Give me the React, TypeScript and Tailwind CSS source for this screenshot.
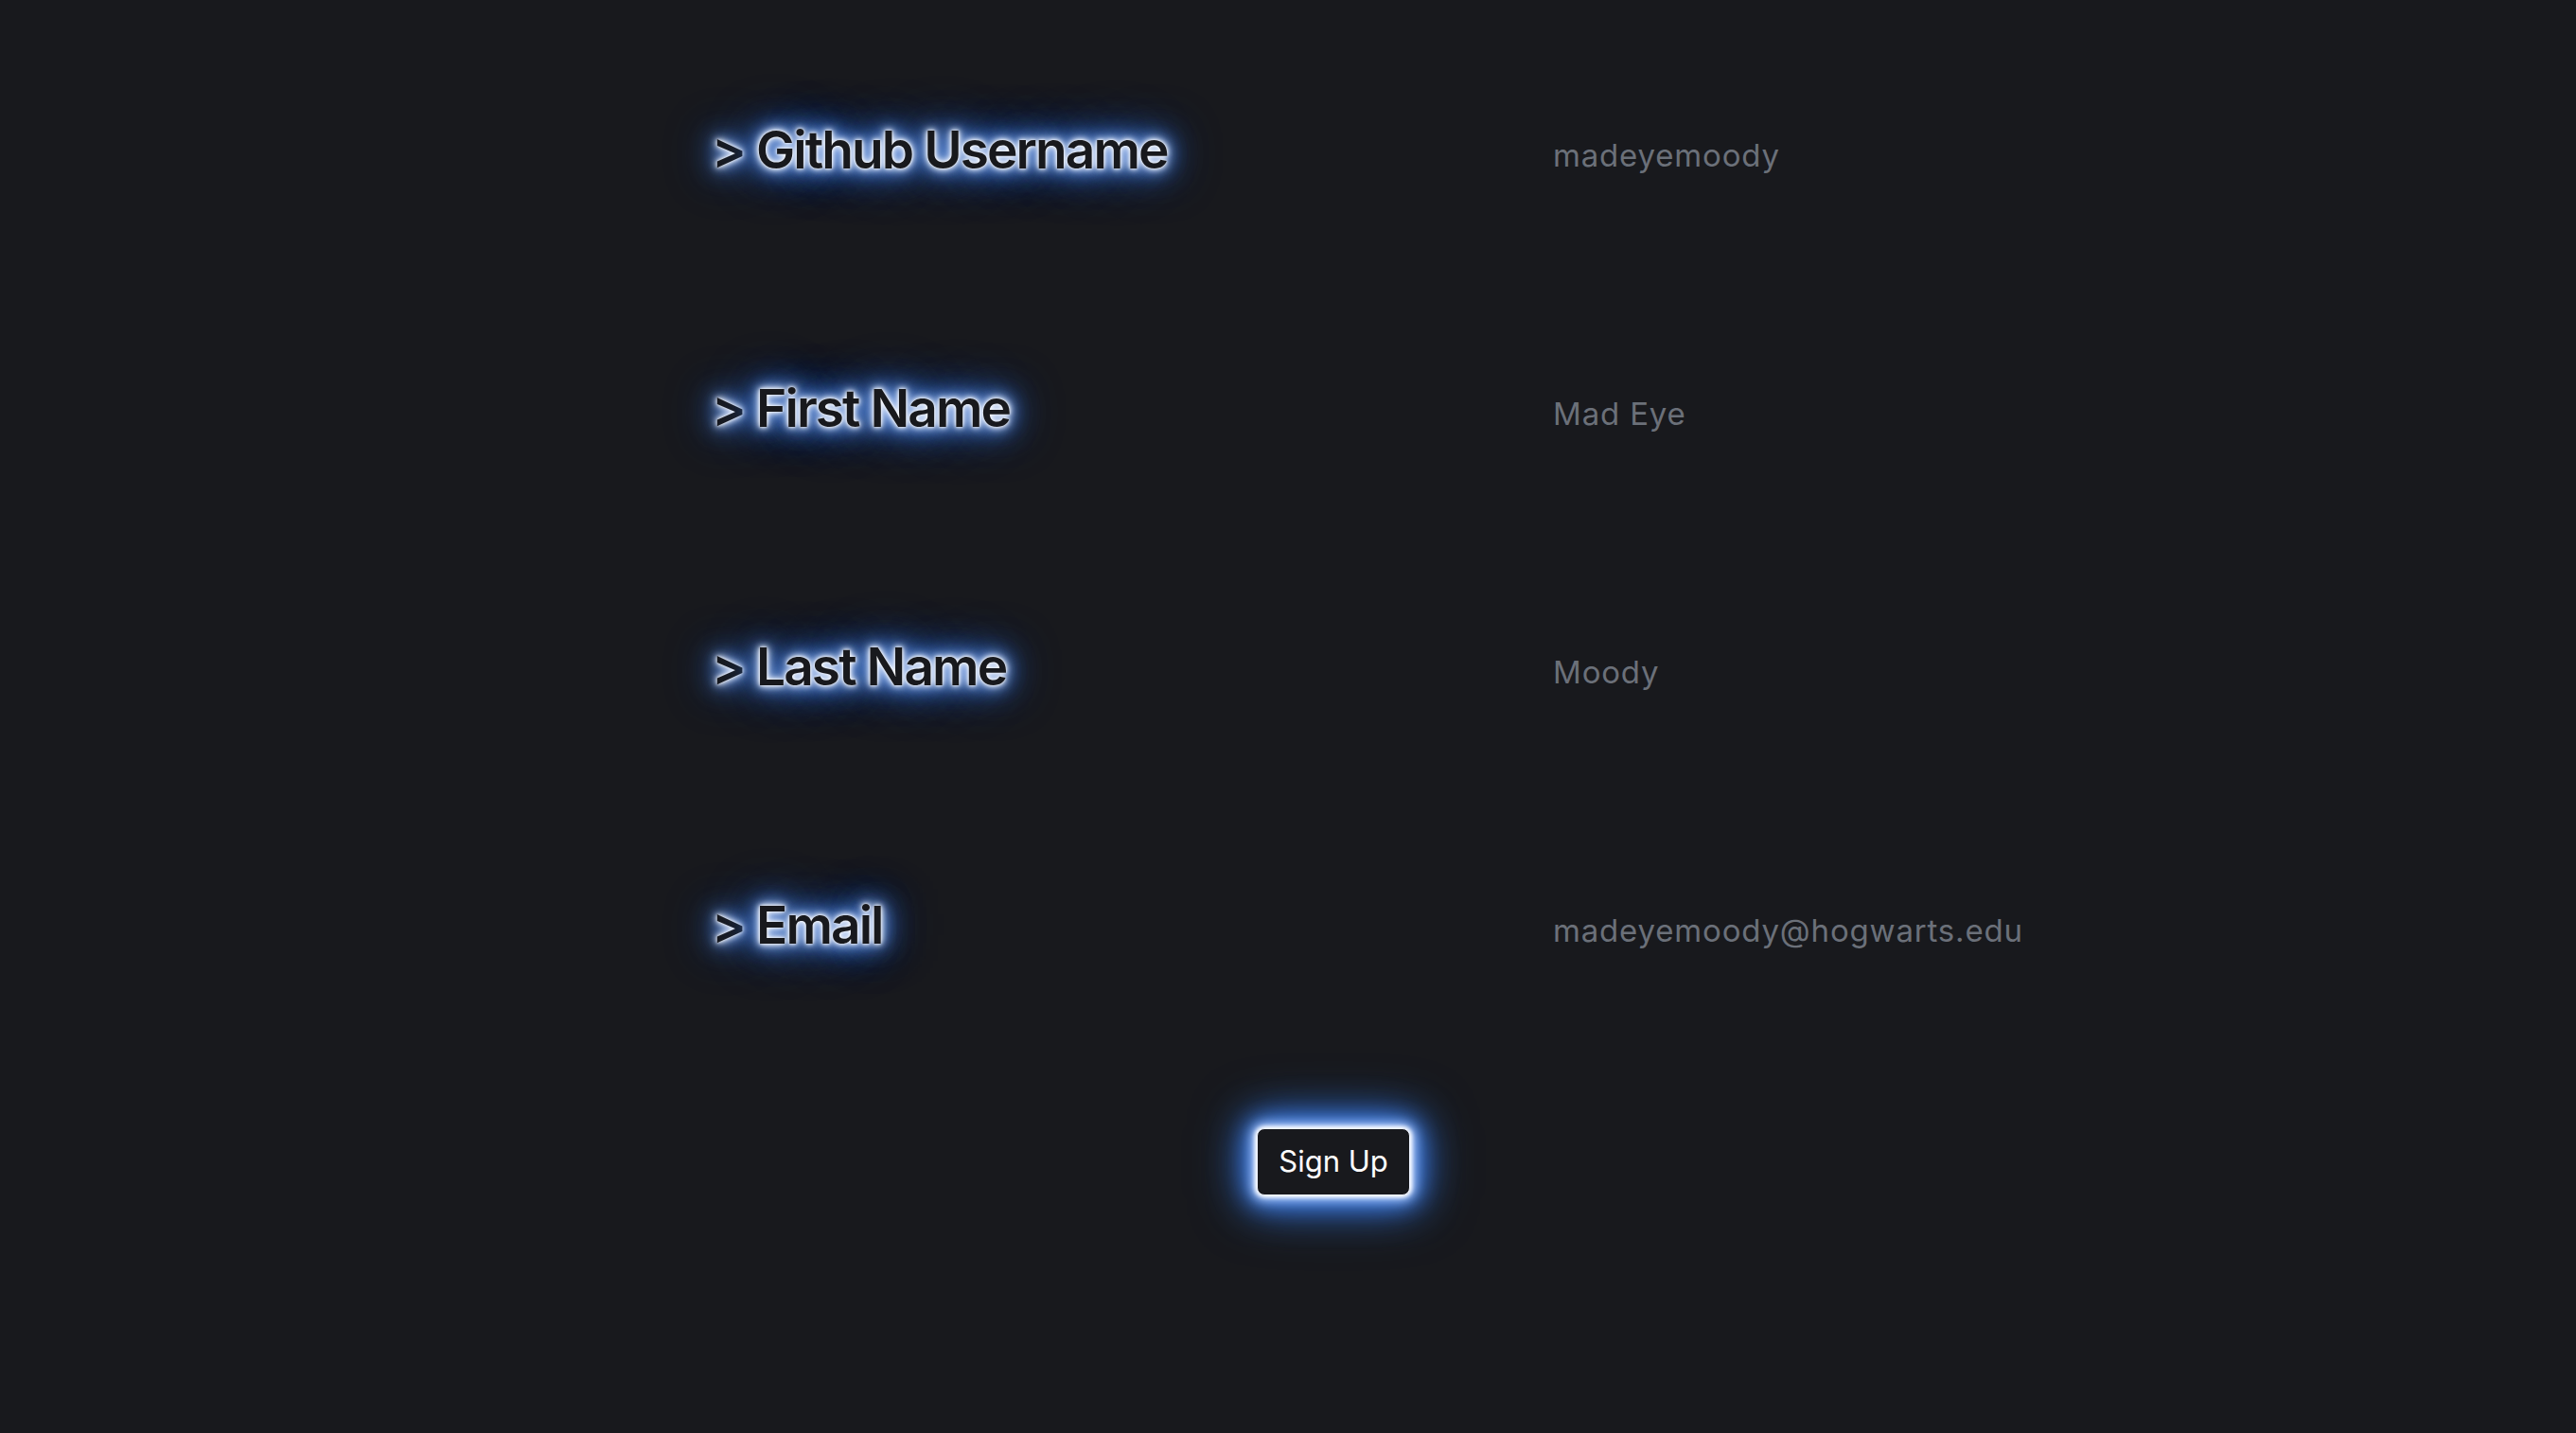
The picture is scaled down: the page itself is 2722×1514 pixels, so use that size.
import React, { useState } from 'react';

const fields = [
    { id: 'github', label: 'Github Username', placeholder: 'madeyemoody' },
    { id: 'first', label: 'First Name', placeholder: 'Mad Eye' },
    { id: 'last', label: 'Last Name', placeholder: 'Moody' },
    { id: 'email', label: 'Email', placeholder: 'madeyemoody@hogwarts.edu' },
];

const App: React.FC = () => {
    const [values, setValues] = useState<Record<string, string>>({});

    return (
        <div className="min-h-screen w-full bg-[#18191d] font-['Inter','Liberation_Sans',sans-serif]">
            <form className="pl-[752px] pt-[22px]" onSubmit={(e) => e.preventDefault()}>
                {fields.map((f) => (
                    <div key={f.id} className="flex h-[273px] items-center">
                        <label
                            htmlFor={f.id}
                            className="w-[889px] text-[55px] font-semibold leading-none tracking-[-0.035em] text-[#18191d] [text-shadow:0_0_3px_#ffffff,0_0_6px_#ffffff,0_0_10px_#dce8ff,0_0_16px_#9dbcf5,0_0_22px_#4a86e8,0_0_30px_#3f7ee6,0_0_40px_#3570d8,0_0_56px_#2f66c8]"
                        >
                            &gt; {f.label}
                        </label>
                        <input
                            id={f.id}
                            value={values[f.id] ?? ''}
                            onChange={(e) => setValues({ ...values, [f.id]: e.target.value })}
                            placeholder={f.placeholder}
                            className="mt-[12px] w-[700px] bg-transparent text-[33px] tracking-[0.025em] text-gray-300 outline-none placeholder:text-[#6b7079]"
                        />
                    </div>
                ))}
                <div className="mt-[78px] pl-[576px]">
                    <button
                        type="submit"
                        className="h-[71px] w-[162px] rounded-lg border border-[#eef3ff] bg-[#18191d] text-[31px] text-white shadow-[0_0_4px_2px_#ffffff,0_0_12px_4px_#c8dbff,0_0_22px_8px_#4a86e8,0_0_40px_10px_#3570d8,0_0_60px_8px_#24508f]"
                    >
                        Sign Up
                    </button>
                </div>
            </form>
        </div>
    );
};

export default App;
